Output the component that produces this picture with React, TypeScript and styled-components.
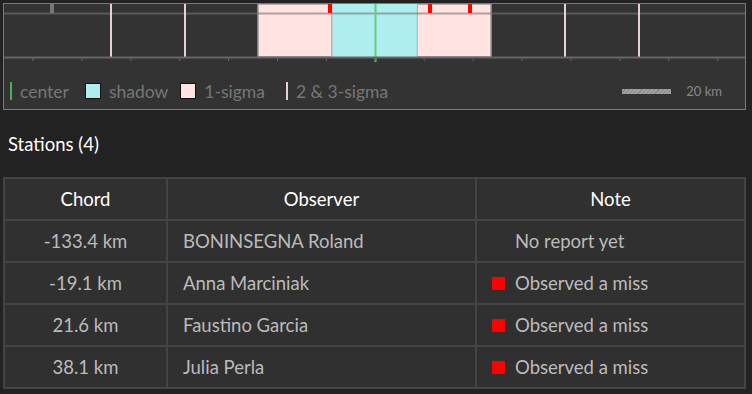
import styled, { createGlobalStyle } from "styled-components";

const GlobalStyle = createGlobalStyle`
  html, body {
    margin: 0;
    padding: 0;
    background: #222222;
    font-family: Lato, "Noto Sans", sans-serif;
  }
`;

const Page = styled.div`
  display: flex;
  flex-direction: column;
  padding: 3px 6px 0 3px;
  width: 752px;
  box-sizing: border-box;
`;

const ChartPanel = styled.div`
  display: flex;
  flex-direction: column;
  border: 1px solid #7a7a7a;
  background: #333333;
  height: 107px;
  box-sizing: border-box;
`;

const ChartSvg = styled.svg`
  display: block;
`;

const Legend = styled.div`
  display: flex;
  align-items: center;
  height: 24px;
  margin-top: 17px;
  padding: 0 23px 0 6px;
  color: #777777;
  font-size: 17.5px;
`;

const LegendItem = styled.div<{ $space: number }>`
  display: flex;
  align-items: center;
  gap: 8px;
  margin-right: ${(p) => p.$space}px;
`;

const LegendBar = styled.span<{ $color: string }>`
  display: inline-block;
  width: 2px;
  height: 18px;
  background: ${(p) => p.$color};
`;

const Swatch = styled.span<{ $color: string }>`
  display: inline-block;
  width: 14px;
  height: 14px;
  background: ${(p) => p.$color};
  border: 1px solid #111111;
`;

const Scale = styled.div`
  display: flex;
  align-items: center;
  gap: 15px;
  margin-left: auto;
  font-size: 13px;
  color: #888888;
`;

const ScaleBar = styled.span`
  display: inline-block;
  width: 49px;
  height: 5px;
  background: repeating-linear-gradient(
    135deg,
    #a0a0a0 0px,
    #a0a0a0 2px,
    #8a8a8a 2px,
    #8a8a8a 3px
  );
`;

const SectionTitle = styled.h3`
  margin: 0;
  padding: 22px 0 0 5px;
  height: 46px;
  box-sizing: border-box;
  font-size: 18.5px;
  font-weight: 400;
  color: #ffffff;
  line-height: 24px;
`;

const Table = styled.table`
  border-collapse: collapse;
  background: #303030;
  width: 743px;
  table-layout: fixed;
  margin-top: 21px;
`;

const HeadCell = styled.th<{ $width?: number }>`
  ${(p) => (p.$width ? `width: ${p.$width}px;` : "")}
  height: 40px;
  border: 2px solid #444444;
  color: #ffffff;
  font-weight: 400;
  font-size: 18.5px;
  text-align: center;
  padding: 0;
`;

const Cell = styled.td<{ $align?: "left" | "center" }>`
  height: 40px;
  border: 2px solid #444444;
  color: #bbbbbb;
  font-size: 18.5px;
  text-align: ${(p) => p.$align ?? "left"};
  padding: 0 0 0 ${(p) => (p.$align === "center" ? 0 : 15)}px;
`;

const Note = styled.div`
  display: flex;
  align-items: center;
  gap: 10px;
`;

const Marker = styled.span<{ $show: boolean }>`
  display: inline-block;
  width: 13px;
  height: 13px;
  background: ${(p) => (p.$show ? "#ff0000" : "transparent")};
`;

const ticks = Array.from({ length: 15 }, (_, i) => 29 + i * 48.9);
const sigmaLines = [107, 181, 561, 635];
const redMarks = [324, 424, 464];

const stations = [
  { chord: "-133.4 km", observer: "BONINSEGNA Roland", note: "No report yet", miss: false },
  { chord: "-19.1 km", observer: "Anna Marciniak", note: "Observed a miss", miss: true },
  { chord: "21.6 km", observer: "Faustino Garcia", note: "Observed a miss", miss: true },
  { chord: "38.1 km", observer: "Julia Perla", note: "Observed a miss", miss: true },
];

const Chart = () => (
  <ChartSvg width={741} height={58} viewBox="0 0 741 58">
    <rect x={254} y={0} width={74} height={53} fill="#ffe4e1" stroke="#9a9a9a" strokeWidth={1.5} />
    <rect x={413} y={0} width={74} height={53} fill="#ffe4e1" stroke="#9a9a9a" strokeWidth={1.5} />
    <rect x={328} y={0} width={85} height={53} fill="#afeeee" />
    <line x1={328} y1={0} x2={328} y2={53} stroke="#b9b9b9" strokeWidth={1} />
    <line x1={413} y1={0} x2={413} y2={53} stroke="#9fd8d8" strokeWidth={1} />
    <line x1={0} y1={9.5} x2={741} y2={9.5} stroke="#777777" strokeOpacity={0.6} strokeWidth={2} />
    {sigmaLines.map((x) => (
      <line key={x} x1={x} y1={0} x2={x} y2={53} stroke="#e6d2d0" strokeWidth={2} />
    ))}
    <line x1={371.5} y1={0} x2={371.5} y2={58} stroke="#5fcf7a" strokeWidth={2} />
    <line x1={0} y1={53.5} x2={741} y2={53.5} stroke="#666666" strokeWidth={2} />
    {ticks.map((x) => (
      <line key={x} x1={x} y1={53} x2={x} y2={57} stroke="#666666" strokeWidth={1} />
    ))}
    <rect x={46} y={0} width={4} height={9} fill="#777777" />
    {redMarks.map((x) => (
      <rect key={x} x={x} y={0} width={4} height={9} fill="#ff0000" />
    ))}
  </ChartSvg>
);

export default function App() {
  return (
    <>
      <GlobalStyle />
      <Page>
        <ChartPanel>
          <Chart />
          <Legend>
            <LegendItem $space={16}>
              <LegendBar $color="#4caf50" />
              center
            </LegendItem>
            <LegendItem $space={12}>
              <Swatch $color="#afeeee" />
              shadow
            </LegendItem>
            <LegendItem $space={21}>
              <Swatch $color="#ffe4e1" />
              1-sigma
            </LegendItem>
            <LegendItem $space={0}>
              <LegendBar $color="#e6d2d0" />
              2 &amp; 3-sigma
            </LegendItem>
            <Scale>
              <ScaleBar />
              20 km
            </Scale>
          </Legend>
        </ChartPanel>
        <SectionTitle>Stations (4)</SectionTitle>
        <Table>
          <thead>
            <tr>
              <HeadCell $width={161}>Chord</HeadCell>
              <HeadCell $width={307}>Observer</HeadCell>
              <HeadCell>Note</HeadCell>
            </tr>
          </thead>
          <tbody>
            {stations.map((s) => (
              <tr key={s.observer}>
                <Cell $align="center">{s.chord}</Cell>
                <Cell>{s.observer}</Cell>
                <Cell>
                  <Note>
                    <Marker $show={s.miss} />
                    {s.note}
                  </Note>
                </Cell>
              </tr>
            ))}
          </tbody>
        </Table>
      </Page>
    </>
  );
}
